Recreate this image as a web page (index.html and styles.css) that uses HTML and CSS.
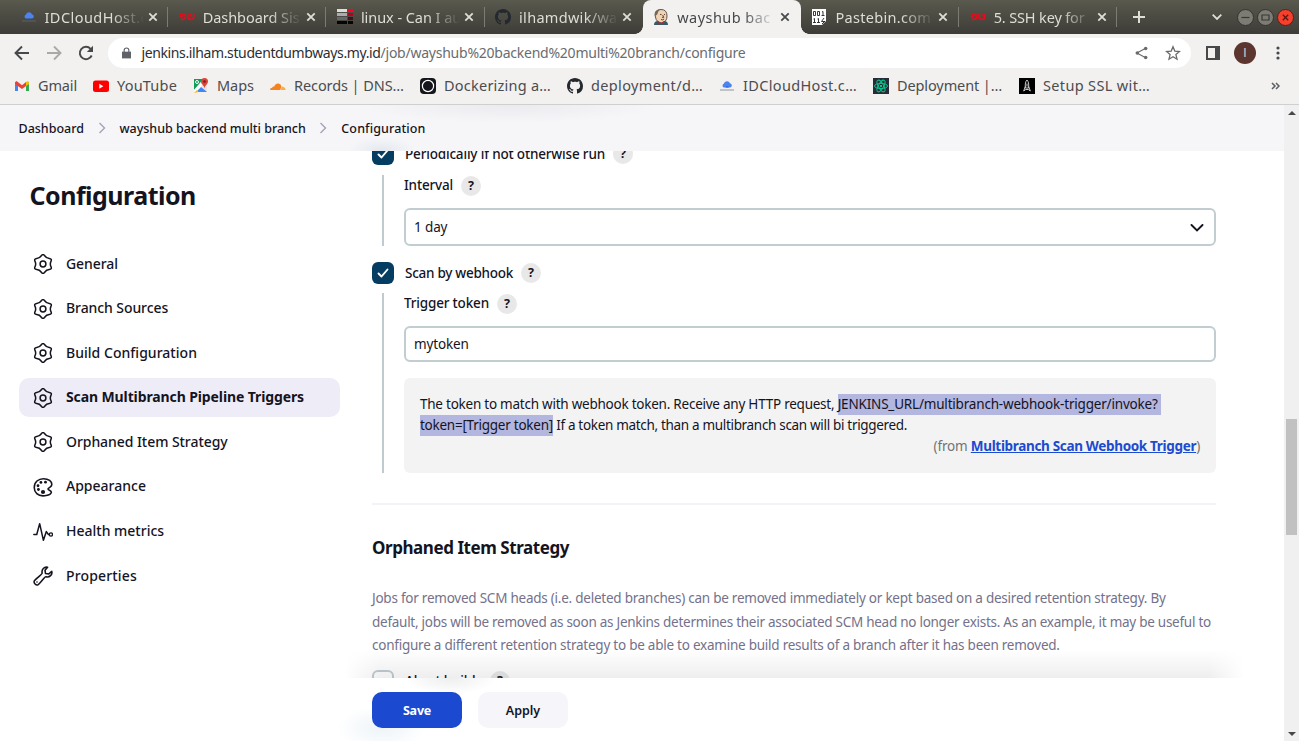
FILE: index.html
```html
<!DOCTYPE html>
<html lang="en">
<head>
<meta charset="utf-8">
<title>wayshub backend multi branch Config [Jenkins]</title>
<link rel="stylesheet" href="styles.css">
</head>
<body>
<svg class="defs" aria-hidden="true">
  <symbol id="close" viewBox="0 0 10 10"><path d="M1.3 1.3l7.4 7.4M8.7 1.3L1.3 8.7" fill="none" stroke="currentColor" stroke-width="1.8"/></symbol>
  <symbol id="cloud" viewBox="0 0 16 16"><path d="M5 9.500a2 2 0 0 1-.2-3.800A3.300 3.300 0 0 1 11 5.300a2.150 2.150 0 0 1 .2 4.200z" fill="#4b83f0"/><path d="M6.500 9.500a1.700 1.700 0 0 1 3.300 0z" fill="#1d62d8"/><path d="M1 12h14" stroke="#8a94a3" stroke-width="1.600" opacity=".6"/></symbol>
  <symbol id="cloud-dim" viewBox="0 0 16 16"><path d="M5 9.500a2 2 0 0 1-.2-3.800A3.300 3.300 0 0 1 11 5.300a2.150 2.150 0 0 1 .2 4.200z" fill="#4b83f0"/><path d="M1 12h14" stroke="#5b6370" stroke-width="1.600" opacity=".6"/></symbol>
  <symbol id="dw" viewBox="0 0 18 10"><path d="M1 2h3.500q2.800 0 2.800 2.800t-2.800 2.800H2M1 4.900h3M10 1v3.800q0 2.800 2.800 2.800h1q2.800 0 2.800-2.800V1M13.300 1v3.500" fill="none" stroke="#e50d1b" stroke-width="1.900"/></symbol>
  <symbol id="github" viewBox="0 0 16 16"><path fill="currentColor" d="M8 0C3.58 0 0 3.58 0 8c0 3.54 2.29 6.53 5.47 7.59.4.07.55-.17.55-.38 0-.19-.01-.82-.01-1.49-2.010.37-2.530-.49-2.690-.94-.09-.23-.48-.94-.82-1.130-.28-.15-.68-.52-.01-.53.63-.01 1.080.58 1.230.82.72 1.210 1.870.87 2.330.66.07-.52.28-.87.51-1.070-1.780-.2-3.640-.89-3.640-3.950 0-.87.31-1.590.82-2.150-.08-.2-.36-1.020.08-2.120 0 0 .67-.21 2.200.82.64-.18 1.320-.27 2-.27s1.360.09 2 .27c1.530-1.040 2.200-.82 2.200-.82.44 1.100.16 1.920.08 2.120.51.56.82 1.270.82 2.150 0 3.070-1.870 3.750-3.650 3.950.29.25.54.73.54 1.480 0 1.070-.01 1.930-.01 2.200 0 .21.15.46.55.38A8.010 8.010 0 0 0 16 8c0-4.420-3.580-8-8-8z"/></symbol>
  <symbol id="gear" viewBox="0 0 24 24"><g fill="none" stroke="currentColor" stroke-width="1.800"><path d="M21.550 8.800Q23.100 5.600 19.550 5.330 16 5.070 14 2.130 12-.8 10 2.130 8 5.070 4.450 5.330.9 5.600 2.450 8.800 4 12 2.450 15.200.9 18.400 4.450 18.670 8 18.930 10 21.870 12 24.800 14 21.870 16 18.930 19.550 18.670 23.100 18.400 21.550 15.200 20 12 21.550 8.800z"/><circle cx="12" cy="12" r="3.500"/></g></symbol>
  <symbol id="crumb" viewBox="0 0 8 12"><path d="M1.500 1l5 5-5 5" fill="none" stroke="#a3a2b8" stroke-width="1.400"/></symbol>
  <symbol id="tick" viewBox="0 0 22 22"><path d="M6.500 11.500l3 3 6-7" fill="none" stroke="#fff" stroke-width="1.900" stroke-linecap="round" stroke-linejoin="round"/></symbol>
</svg>

<header class="tabs">
  <div class="tab"><svg class="fav"><use href="#cloud-dim"/></svg><span class="title wide">IDCloudHost.c</span><svg class="x"><use href="#close"/></svg></div>
  <div class="tab"><svg class="fav"><use href="#dw"/></svg><span class="title">Dashboard Sis</span><svg class="x"><use href="#close"/></svg></div>
  <div class="tab"><svg class="fav" viewBox="0 0 16 16"><path d="M0 0h10v3H0z" fill="#ddd"/><path d="M0 4h10v3H0z" fill="#aaaab0"/><path d="M0 8h10v3H0z" fill="#68686c"/><path d="M0 12h10v3H0zM11 12h5v3h-5z" fill="#050505"/><path d="M11 0h5v3h-5z" fill="#ff0020"/><path d="M11 4h5v3h-5z" fill="#b80020"/><path d="M11 8h5v3h-5z" fill="#481018"/></svg><span class="title">linux - Can I au</span><svg class="x"><use href="#close"/></svg></div>
  <div class="tab before"><svg class="fav git"><use href="#github"/></svg><span class="title mid">ilhamdwik/wa</span><svg class="x"><use href="#close"/></svg></div>
  <div class="tab active"><svg class="fav" viewBox="0 0 16 16"><path d="M2 6Q2 .5 8 .5T14 7q0 6-5.500 7Q3 13 2.500 8z" fill="#efd2b2" stroke="#54443b" stroke-width=".9"/><path d="M2 7Q1 1 7 .6q-2 1.400-2.800 4.900z" fill="#776454"/><path d="M1 16q0-4 4-4l3 2 3-2q4 0 4 4z" fill="#315b67"/><path d="M5.500 12.500L8 14l3-1.500v3L8 14.500l-2.500 1z" fill="#d71920"/><path d="M7 5.500h1.500M11 5.500h1M8 10.500q2 1 3-.5M9.700 6l1 2.400H9" fill="none" stroke="#493327" stroke-width=".9"/></svg><span class="title wide">wayshub bac</span><svg class="x"><use href="#close"/></svg></div>
  <div class="tab"><svg class="fav" viewBox="0 0 16 16"><path d="M1 0h14v12l-4 4H1z" fill="#fff"/><g fill="none" stroke="#202329" stroke-width=".9"><path d="M2.500 2.500h2v4h-2zM6.500 2.500h2v4h-2zM11 3l1-.5v4M10.500 6.500h3M2.500 10l1-.5v4M2 13.500h3M6.500 10l1-.5v4M6 13.500h3M13 9l-2.500 3.500H14M11 15l3-3"/></g></svg><span class="title mid">Pastebin.com</span><svg class="x"><use href="#close"/></svg></div>
  <div class="tab"><svg class="fav"><use href="#dw"/></svg><span class="title ssh">5. SSH key for</span><svg class="x"><use href="#close"/></svg></div>
  <svg class="plus" viewBox="0 0 12 12"><path d="M6 0v12M0 6h12" stroke="currentColor" stroke-width="2"/></svg>
  <svg class="down" viewBox="0 0 10 6"><path d="M.7.7L5 5 9.300.7" fill="none" stroke="currentColor" stroke-width="1.800"/></svg>
  <div class="winbtns">
    <svg viewBox="0 0 17 17"><circle cx="8.500" cy="8.500" r="8" fill="#7c7b74" stroke="#34332e"/><path d="M4.500 8.500h8" stroke="#3a3934" stroke-width="1.200"/></svg>
    <svg viewBox="0 0 17 17"><circle cx="8.500" cy="8.500" r="8" fill="#7c7b74" stroke="#34332e"/><path d="M5 6h7v5H5z" fill="none" stroke="#3a3934" stroke-width="1.200"/></svg>
    <svg viewBox="0 0 17 17"><circle cx="8.500" cy="8.500" r="8" fill="#f4402c" stroke="#5b2019"/><path d="M5.800 5.800l5.400 5.400M11.200 5.800l-5.400 5.400" stroke="#5b1710" stroke-width="1.300"/></svg>
  </div>
</header>

<nav class="toolbar">
  <svg class="nav" viewBox="0 0 16 16"><path d="M15 8H2M8 1.500L1.500 8 8 14.500" fill="none" stroke="#47484a" stroke-width="1.900"/></svg>
  <svg class="nav" viewBox="0 0 16 16"><path d="M1 8h13M8 1.500L14.500 8 8 14.500" fill="none" stroke="#a9a9a8" stroke-width="1.900"/></svg>
  <svg class="nav" viewBox="0 0 16 16"><path d="M13.700 10.500A6.200 6.200 0 1 1 12.600 3.800L14 5.200" fill="none" stroke="#47484a" stroke-width="1.900"/><path d="M15 .8V7H8.800z" fill="#47484a"/></svg>
  <div class="address">
    <svg class="lock" viewBox="0 0 10 12"><path d="M0 4.500h10V12H0z" fill="#5f6368"/><path d="M2.400 5V3a2.600 2.600 0 0 1 5.200 0v2" fill="none" stroke="#5f6368" stroke-width="1.300"/></svg>
    <span class="host">jenkins.ilham.studentdumbways.my.id</span><span class="path">/job/wayshub%20backend%20multi%20branch/configure</span>
    <svg class="share" viewBox="0 0 14 14"><path d="M11.500 2L2 7l9.500 5" fill="none" stroke="#696a6c" stroke-width="1.200"/><g fill="#696a6c"><circle cx="11.500" cy="2.200" r="1.900"/><circle cx="2.500" cy="7" r="1.900"/><circle cx="11.500" cy="11.800" r="1.900"/></g></svg>
    <svg class="star" viewBox="0 0 16 16"><path d="M8 1.800l1.800 4.300 4.700.4-3.600 3.100 1.100 4.600L8 11.700l-4 2.500 1.100-4.600L1.500 6.500l4.700-.4z" fill="none" stroke="#696a6c" stroke-width="1.300"/></svg>
  </div>
  <svg class="panel" viewBox="0 0 14 14"><path d="M1 1h12v12H1z" fill="none" stroke="#47484a" stroke-width="2"/><path d="M9 0h5v14H9z" fill="#47484a"/></svg>
  <span class="avatar">I</span>
  <svg class="dots" viewBox="0 0 4 14"><g fill="#47484a"><circle cx="2" cy="2" r="1.600"/><circle cx="2" cy="7" r="1.600"/><circle cx="2" cy="12" r="1.600"/></g></svg>
</nav>

<nav class="bookmarks">
  <a class="b1"><svg viewBox="0 0 16 16"><path d="M1 3.500v9.500h3V7z" fill="#4285f4"/><path d="M15 3.500v9.500h-3V7z" fill="#34a853"/><path d="M1 4.500L2.500 3 8 7.200 12 4v4L8 11 1 6z" fill="#ea4335"/><path d="M12 4l1.500-1L15 4.500V6l-3 2.300z" fill="#fbbc04"/></svg><span class="t-gmail">Gmail</span></a>
  <a class="b2"><svg viewBox="0 0 16 16"><rect y="2.500" width="16" height="11.500" rx="2.500" fill="#f00"/><path d="M6.300 5.800v5l4-2.500z" fill="#fff"/></svg><span class="t-yt">YouTube</span></a>
  <a class="b3"><svg viewBox="0 0 16 16"><path d="M1 1h13v13H1z" fill="#e3e6e7"/><path d="M1 1h9L1 12z" fill="#0f9d58"/><path d="M3 14l5-5 6 5z" fill="#4285f4"/><path d="M1 12l8-8 1.500 2L2 15z" fill="#fff"/><path d="M1 15l3-3 1.500 2z" fill="#fbbc04"/><circle cx="4" cy="4" r="1.500" fill="none" stroke="#fff"/><path d="M11.500 0a3.500 3.500 0 0 1 3.500 3.500c0 2.500-3 3.500-3.500 7C11 7 8 6 8 3.500A3.500 3.500 0 0 1 11.500 0z" fill="#db4437"/><circle cx="11.500" cy="3.500" r="1.300" fill="#7b1b20"/></svg><span class="t-maps">Maps</span></a>
  <a class="b4"><svg viewBox="0 0 16 16"><path d="M0 12q0-2.200 2.200-2.300.3-1.500 2-1.100Q5.600 5 8.700 5.500q2.500.4 2.600 3l-1 3.500z" fill="#f6821f"/><path d="M11.500 8.500q3.500-.2 4.200 3.500H11z" fill="#fbad41"/></svg><span class="t-dns">Records | DNS…</span></a>
  <a class="b5"><svg viewBox="0 0 16 16"><rect width="16" height="16" rx="4" fill="#15151c"/><circle cx="8" cy="8" r="5.600" fill="none" stroke="#fff" stroke-width="1.200"/></svg><span class="t-dock">Dockerizing a…</span></a>
  <a class="b6"><svg class="dark"><use href="#github"/></svg><span class="t-dep">deployment/d…</span></a>
  <a class="b7"><svg><use href="#cloud"/></svg><span class="t-idc">IDCloudHost.c…</span></a>
  <a class="b8"><svg viewBox="0 0 16 16"><path d="M0 0h16v16H0z" fill="#282b38"/><g fill="none" stroke="#09c58d"><ellipse cx="8" cy="8" rx="6.500" ry="2.600"/><ellipse cx="8" cy="8" rx="6.500" ry="2.600" transform="rotate(60 8 8)"/><ellipse cx="8" cy="8" rx="6.500" ry="2.600" transform="rotate(120 8 8)"/></g><path d="M7 7h2v2H7z" fill="#09c58d"/></svg><span class="t-depl">Deployment |…</span></a>
  <a class="b9"><svg viewBox="0 0 16 16"><path d="M0 0h16v16H0z"/><path d="M6.300 10V6Q6.500 3.500 8 2q1.500 1.500 1.700 4v4zM6.300 8.500L4.700 13l2-1.500h2.600l2 1.500-1.600-4.500M8 5.500v3" fill="none" stroke="#ddd" stroke-width=".9"/></svg><span class="t-ssl">Setup SSL wit…</span></a>
  <svg class="more" viewBox="0 0 9 8"><path d="M1 1l3 3-3 3M5 1l3 3-3 3" fill="none" stroke="#5a5d62" stroke-width="1.500"/></svg>
</nav>

<div class="viewport">
  <div class="page">
    <nav class="crumbs"><span class="c1">Dashboard</span><svg><use href="#crumb"/></svg><span class="c2">wayshub backend multi branch</span><svg><use href="#crumb"/></svg><span class="c3">Configuration</span></nav>
    <div class="body">
      <aside>
        <h1>Configuration</h1>
        <ul>
          <li><svg><use href="#gear"/></svg><span class="s1">General</span></li>
          <li><svg><use href="#gear"/></svg><span class="s1">Branch Sources</span></li>
          <li><svg><use href="#gear"/></svg><span class="s2">Build Configuration</span></li>
          <li class="current"><svg><use href="#gear"/></svg><span>Scan Multibranch Pipeline Triggers</span></li>
          <li><svg><use href="#gear"/></svg><span class="s3">Orphaned Item Strategy</span></li>
          <li><svg viewBox="0 0 24 24"><path d="M14 22.500C5.500 23.500 1.500 18 1.500 12.500 1.500 6 6.500 2 12.500 2S23 5 22.500 9.500c-.4 3-4.500 3.300-4.500 5 0 1.300 4.500 1.800 4 4-.5 2.500-4.500 3.700-8 4z" fill="none" stroke="currentColor" stroke-width="1.900"/><g fill="currentColor"><circle cx="12" cy="18" r="2.500"/><circle cx="6.500" cy="15" r="1.700"/><circle cx="6" cy="10.500" r="1.700"/><circle cx="9.500" cy="6.500" r="1.700"/><circle cx="15" cy="6.200" r="1.700"/></g></svg><span>Appearance</span></li>
          <li><svg viewBox="0 0 24 24"><path d="M1 15h3.500L8 2l4.500 20L16 11.500l2.500 3.500h1" fill="none" stroke="currentColor" stroke-width="1.800" stroke-linecap="round" stroke-linejoin="round"/><circle cx="21.500" cy="15" r="1.900" fill="none" stroke="currentColor" stroke-width="1.600"/></svg><span>Health metrics</span></li>
          <li><svg viewBox="0 0 24 24"><path d="M22.500 6.500L19 9.500 15 9l-.6-4L17.500 1.500C13.500.5 10 4 11 8.500c.3 1.500-8.500 7.500-9.500 9.500-.9 2.500 2 5.500 4.500 4.500 2-1 8-9.800 9.500-9.500 4.500 1 8-2.500 7-6.500z" fill="none" stroke="currentColor" stroke-width="1.900" stroke-linejoin="round"/><circle cx="4.800" cy="19.200" r="1" fill="currentColor"/></svg><span class="s4">Properties</span></li>
        </ul>
      </aside>
      <main>
        <form class="fields">
          <div class="check"><i class="box on"><svg><use href="#tick"/></svg></i><span class="f1">Periodically if not otherwise run</span><b class="help">?</b></div>
          <div class="group first">
            <div class="label"><span class="f1">Interval</span><b class="help">?</b></div>
            <div class="input select"><span>1 day</span><svg viewBox="0 0 14 8"><path d="M1.500 1L7 6.500 12.500 1" fill="none" stroke="currentColor" stroke-width="1.900" stroke-linecap="round"/></svg></div>
          </div>
          <div class="check"><i class="box on"><svg><use href="#tick"/></svg></i><span class="f2">Scan by webhook</span><b class="help">?</b></div>
          <div class="group second">
            <div class="label"><span class="f1">Trigger token</span><b class="help">?</b></div>
            <div class="input">mytoken</div>
            <div class="helpbox">
              <div><span class="h1t">The token to match with webhook token. Receive any HTTP request, </span><mark class="pad">JENKINS_URL/multibranch-webhook-trigger/invoke?</mark></div>
              <div><mark class="tok">token=[Trigger token]</mark><span class="h2t"> If a token match, than a multibranch scan will bi triggered.</span></div>
              <div class="from">(from <a>Multibranch Scan Webhook Trigger</a>)</div>
            </div>
          </div>
          <hr>
          <h2>Orphaned Item Strategy</h2>
          <p><span>Jobs for removed SCM heads (i.e. deleted branches) can be removed immediately or kept based on a desired retention strategy. By</span><span class="p2">default, jobs will be removed as soon as Jenkins determines their associated SCM head no longer exists. As an example, it may be useful to</span><span>configure a different retention strategy to be able to examine build results of a branch after it has been removed.</span></p>
          <div class="check last"><i class="box"></i><span class="f1">Abort builds</span><b class="help">?</b></div>
        </form>
        <footer><button class="save" type="button">Save</button><button type="button">Apply</button></footer>
      </main>
    </div>
  </div>
  <div class="scroll"><i class="up"></i><i class="thumb"></i><i class="dn"></i></div>
</div>
</body>
</html>
```
FILE: styles.css
```css
* { box-sizing: border-box; }
body { margin: 0; width: 1299px; height: 741px; overflow: hidden; display: flex; flex-direction: column; font-family: "Noto Sans", sans-serif; color: #14141f; background: #fff; white-space: nowrap; }
.defs { display: none; }
svg { flex: none; }

/* window tabs */
.tabs { display: flex; align-items: center; height: 34px; flex: none; padding-left: 10px; background: linear-gradient(#5a594e, #3d3c37); color: #deddd6; }
.tab { display: flex; align-items: center; width: 158.2px; height: 34px; padding-left: 10.500px; position: relative; }
.tab:not(.active):not(.before)::after { content: ""; position: absolute; right: 0; top: 7px; width: 1px; height: 20px; background: #7d7c73; }
.tab.active { background: #f2f1f0; color: #47484a; border-radius: 8px 8px 0 0; }
.tab.active::before, .tab.active::after { content: ""; position: absolute; bottom: 0; width: 8px; height: 8px; }
.tab.active::before { left: -8px; background: radial-gradient(circle at 0 0, transparent 7.5px, #f2f1f0 8px); }
.tab.active::after { right: -8px; background: radial-gradient(circle at 100% 0, transparent 7.5px, #f2f1f0 8px); z-index: 1; }
.fav { width: 16px; height: 16px; margin-right: 8px; }
.fav.git { color: #24292f; }
.title { width: 102px; font-size: 14.5px; line-height: 24px; letter-spacing: -.05px; padding-bottom: 1px; -webkit-mask-image: linear-gradient(90deg, #000 65%, transparent 97%); mask-image: linear-gradient(90deg, #000 65%, transparent 97%); }
.title.wide { letter-spacing: .45px; }
.title.mid { letter-spacing: .3px; }
.title.ssh { letter-spacing: -.14px; }
.x { width: 10px; height: 10px; margin-left: 1px; }
.plus { width: 12px; height: 12px; margin-left: 16px; }
.down { width: 10px; height: 6px; margin-left: 67px; }
.winbtns { display: flex; gap: 3px; margin-left: 15px; }
.winbtns svg { width: 17px; height: 17px; }

/* address bar */
.toolbar { display: flex; align-items: center; height: 38px; flex: none; background: #f2f1f0; padding-left: 14px; }
.nav { width: 16px; height: 16px; margin-right: 16px; }
.address { display: flex; align-items: center; width: 1083px; height: 30px; margin-left: -2px; border-radius: 15px; background: #fff; padding-left: 14px; font-size: 14px; }
.lock { width: 9px; height: 12px; margin-right: 10.500px; }
.address span { padding-bottom: 1px; }
.host { color: #2d2e31; letter-spacing: -.38px; }
.path { color: #6a6c70; letter-spacing: -.24px; }
.share { width: 13px; height: 14px; margin-left: auto; }
.star { width: 16px; height: 16px; margin: 0 10px 0 17px; }
.panel { width: 14px; height: 14px; margin-left: 15px; }
.avatar { width: 22px; height: 22px; margin-left: 14px; border-radius: 50%; background: #5d352f; color: #ddd0cd; font: 12px/22px Roboto, sans-serif; text-align: center; }
.dots { width: 4px; height: 14px; margin-left: 20px; }

/* bookmarks */
.bookmarks { display: flex; align-items: center; height: 33px; flex: none; background: #f2f1f0; border-bottom: 1px solid #cfcfcf; padding: 0 0 4px 14px; font-size: 14.5px; color: #4b4c4f; }
.bookmarks a { display: flex; align-items: center; gap: 8px; }
.bookmarks a svg { width: 16px; height: 16px; }
.bookmarks a span { padding-bottom: 2px; }
.bookmarks .dark { color: #24292f; }
.b1 { width: 79px; } .b2 { width: 100px; } .b3 { width: 77px; } .b4 { width: 150px; } .b5 { width: 147px; }
.b6 { width: 152px; } .b7 { width: 154px; } .b8 { width: 146px; } .b9 { width: 252px; }
.t-gmail { letter-spacing: -.15px; } .t-yt { letter-spacing: .2px; } .t-maps { letter-spacing: -.04px; }
.t-dns { letter-spacing: -.08px; } .t-dock { letter-spacing: .23px; } .t-dep { letter-spacing: .36px; }
.t-idc { letter-spacing: .35px; } .t-depl { letter-spacing: -.11px; } .t-ssl { letter-spacing: .35px; }
.more { width: 9px; height: 8px; }

/* page frame */
.viewport { display: flex; flex: 1; min-height: 0; }
.page { width: 1284px; display: flex; flex-direction: column; }
.scroll { width: 15px; background: #f0f0f0; display: flex; flex-direction: column; align-items: center; padding: 6px 0 5px; }
.up, .dn { border: 4px solid transparent; }
.up { border-top: 0; border-bottom-color: #484848; }
.dn { border-bottom: 0; border-top-color: #484848; margin-top: auto; }
.thumb { width: 11px; height: 116px; background: #c1c1c1; margin-top: 304px; }
.crumbs { display: flex; align-items: center; height: 46px; flex: none; padding-left: 18.500px; font-size: 12.5px; font-weight: 500; background: radial-gradient(ellipse 34px 14px at 382px 46px, #e3e8ee, transparent), radial-gradient(ellipse 150px 18px at 510px 0, #ebebef, transparent), #f6f6f9; }
.crumbs svg { width: 8px; height: 12px; }
.crumbs span:first-child { margin-right: 13.500px; }
.c1 { letter-spacing: 0; }
.c2 { letter-spacing: -.02px; margin: 0 13px 0 14px; }
.c3 { letter-spacing: .12px; margin-left: 14.500px; }
.body { display: flex; flex: 1; min-height: 0; }

/* side navigation */
aside { width: 340px; padding: 25px 0 0 19px; }
h1 { margin: 0 0 49.500px 10.500px; font-size: 25px; line-height: 38px; height: 19px; display: flex; align-items: center; padding-top: 19px; letter-spacing: -.51px; }
aside ul { list-style: none; margin: 0; padding: 0; display: flex; flex-direction: column; gap: 5.600px; }
aside li { display: flex; align-items: center; height: 39px; padding-left: 14px; gap: 13px; border-radius: 10px; width: 321px; font-size: 14px; font-weight: 500; letter-spacing: 0; }
aside li svg { width: 20px; height: 20px; }
aside li span { padding-bottom: 2px; }
.current { background: #eeecf6; font-weight: 700; letter-spacing: -.11px; }
.s1 { letter-spacing: -.08px; } .s2 { letter-spacing: .03px; } .s3 { letter-spacing: -.06px; } .s4 { letter-spacing: .16px; }

/* configuration form */
main { flex: 1; display: flex; flex-direction: column; }
.fields { height: 527px; overflow: hidden; padding: 0 68px 0 32px; position: relative; flex: none; font-size: 13.5px; }
.fields::after { content: ""; position: absolute; left: 5px; right: 40px; bottom: 0; height: 28px; background: linear-gradient(transparent, rgba(0,0,0,.065)); -webkit-mask-image: linear-gradient(90deg, transparent, #000 35px, #000 calc(100% - 35px), transparent); mask-image: linear-gradient(90deg, transparent, #000 35px, #000 calc(100% - 35px), transparent); }
.check { display: flex; align-items: center; height: 22px; font-weight: 500; }
.check:first-child { margin-top: -8px; }
.box { width: 22px; height: 22px; margin-right: 11px; border: 2px solid #c2cdd1; border-radius: 6px; }
.box.on { border: 0; background: #053c61; }
.box svg { width: 22px; height: 22px; display: block; }
.help { width: 20px; height: 20px; margin-left: 8px; border-radius: 50%; background: #e8e8e8; font-size: 12.5px; line-height: 20px; text-align: center; font-weight: 700; }
.group { margin-left: 10px; border-left: 2px solid #bfcccf; padding-left: 20px; }
.first { margin: 10px 0 16px 10px; height: 71px; padding-top: 1px; }
.second { margin-top: 9px; height: 180px; padding-top: 1px; }
.label { display: flex; align-items: center; height: 20px; font-weight: 500; }
.label span { padding-bottom: 2px; }
.f1 { letter-spacing: -.17px; } .f2 { letter-spacing: -.27px; }
.input { display: flex; align-items: center; justify-content: space-between; height: 36px; margin-top: 12px; padding: 0 10px 0 8px; border: 2px solid #c2cdd1; border-radius: 6px; letter-spacing: -.13px; }
.select { height: 38px; }
.select svg { width: 14px; height: 8px; margin-top: 1px; }
.helpbox { margin-top: 16px; height: 95px; border-radius: 6px; padding: 16px; background: #f3f3f3; }
.helpbox div { height: 21px; line-height: 21px; white-space: pre; }
.h1t { letter-spacing: -.24px; } .h2t { letter-spacing: -.32px; }
mark { display: inline-block; height: 21px; color: inherit; background: #b3b6df; letter-spacing: -.19px; }
.pad { padding-right: 3px; }
.tok { letter-spacing: -.25px; }
.helpbox .from { text-align: right; color: #737373; letter-spacing: -.18px; }
.from a { color: #1c4bd0; font-weight: 700; text-decoration: underline; letter-spacing: -.33px; }
hr { margin: 30px 0 0; border: 0; height: 2px; background: #f2f2f8; }
h2 { margin: 30px 0 0; font-size: 17px; line-height: 25px; letter-spacing: -.44px; }
p { display: flex; flex-direction: column; margin: 27px 0 0; line-height: 23.600px; color: #73718b; letter-spacing: -.24px; }
.p2 { letter-spacing: -.265px; }
.last { margin-top: 12px; }
footer { flex: 1; display: flex; gap: 16px; padding: 14px 0 0 32px; background: radial-gradient(ellipse 46px 16px at 110px 0, #eeeeef, transparent), radial-gradient(ellipse 45px 22px at 42px 50px, #edf4f8, transparent), #fff; }
button { width: 90px; height: 36px; border: 0; border-radius: 10px; background: #f6f5fa; color: #14141f; font: 600 12.5px "Noto Sans", sans-serif; padding: 0; }
.save { background: #1b49cf; color: #fff; font-weight: 700; letter-spacing: -.2px; }
```
